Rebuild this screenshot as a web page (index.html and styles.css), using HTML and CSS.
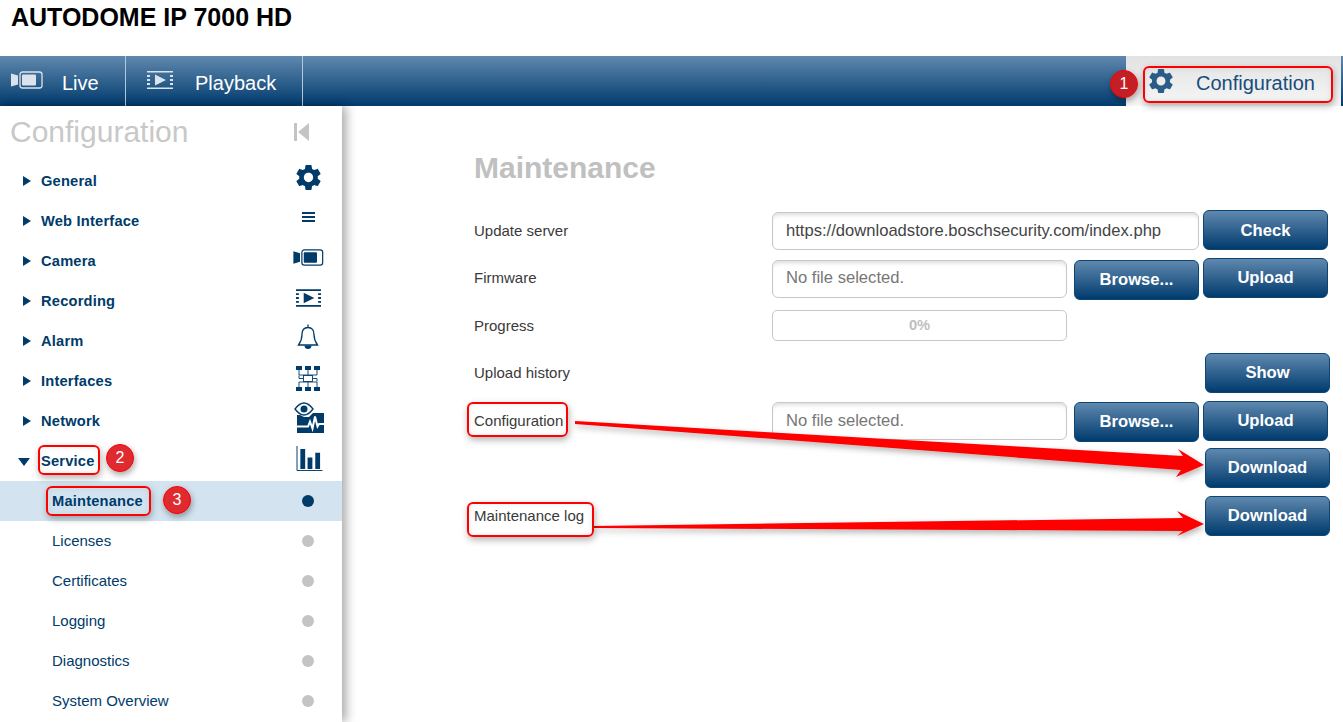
FILE: index.html
```html
<!DOCTYPE html>
<html lang="en">
<head>
<meta charset="utf-8">
<title>AUTODOME IP 7000 HD</title>
<link rel="stylesheet" href="styles.css">
</head>
<body>
<svg class="defs" width="0" height="0" aria-hidden="true">
  <symbol id="gear" viewBox="0 0 24 24"><path d="M19.14 12.94c.04-.3.06-.61.06-.94 0-.32-.02-.64-.07-.94l2.03-1.58c.18-.14.23-.41.12-.61l-1.92-3.32c-.12-.22-.37-.29-.59-.22l-2.39.96c-.5-.38-1.03-.7-1.62-.94l-.36-2.54c-.04-.24-.24-.41-.48-.41h-3.84c-.24 0-.43.17-.47.41l-.36 2.54c-.59.24-1.13.57-1.62.94l-2.39-.96c-.22-.08-.47 0-.59.22L2.74 8.87c-.12.21-.08.47.12.61l2.03 1.58c-.05.3-.09.63-.09.94s.02.64.07.94l-2.03 1.58c-.18.14-.23.41-.12.61l1.92 3.32c.12.22.37.29.59.22l2.39-.96c.5.38 1.03.7 1.62.94l.36 2.54c.05.24.24.41.48.41h3.84c.24 0 .44-.17.47-.41l.36-2.54c.59-.24 1.13-.56 1.62-.94l2.39.96c.22.08.47 0 .59-.22l1.92-3.32c.12-.22.07-.47-.12-.61l-2.01-1.58zM12 15.6c-1.98 0-3.6-1.62-3.6-3.6s1.62-3.6 3.6-3.6 3.6 1.62 3.6 3.6-1.62 3.6-3.6 3.6z" fill-rule="evenodd"/></symbol>
  <symbol id="cam" viewBox="0 0 32 18"><path d="M0 2.500l7 2v9l-7 2z"/><rect x="9" y="1" width="22" height="16" rx="2.500" fill="none" stroke="currentColor" stroke-width="1.300"/><rect x="11" y="3.500" width="14" height="11" rx="1"/></symbol>
  <symbol id="play" viewBox="0 0 26 18"><path d="M0 0h26v1.600H0zM0 16.400h26V18H0zM0 4h3v2H0zM0 8h3v2H0zM0 12h3v2H0zM23 4h3v2h-3zM23 8h3v2h-3zM23 12h3v2h-3zM8 3.500l11 5.500-11 5.500z"/></symbol>
</svg>

<h1 class="device">AUTODOME IP 7000 HD</h1>

<header class="topbar">
  <a class="tab tab-live"><svg class="tab-icon tab-icon-cam"><use href="#cam"/></svg><span>Live</span></a>
  <a class="tab tab-playback"><svg class="tab-icon tab-icon-play"><use href="#play"/></svg><span>Playback</span></a>
  <a class="tab-active"><svg class="tab-gear"><use href="#gear"/></svg><span>Configuration</span></a>
</header>

<div class="main">
  <nav class="sidebar">
    <div class="side-head">
      <span class="side-title">Configuration</span>
      <svg class="collapse" viewBox="0 0 15 18"><path d="M0 0h3v18H0zM15 0v18L4 9z"/></svg>
    </div>
    <ul class="menu">
      <li class="item"><i class="arrow"></i><b>General</b><svg class="ico ico-gear"><use href="#gear"/></svg></li>
      <li class="item"><i class="arrow"></i><b>Web Interface</b><svg class="ico ico-lines" viewBox="0 0 13 10"><path d="M0 0h13v2H0zM0 4h13v2H0zM0 8h13v2H0z"/></svg></li>
      <li class="item"><i class="arrow"></i><b>Camera</b><svg class="ico ico-cam"><use href="#cam"/></svg></li>
      <li class="item"><i class="arrow"></i><b>Recording</b><svg class="ico ico-play"><use href="#play"/></svg></li>
      <li class="item"><i class="arrow"></i><b>Alarm</b>
        <svg class="ico ico-bell" viewBox="0 0 22 26"><path d="M11 0.500v3M11 3.500c-4 0-6 3-6 7 0 5-1 7-3.500 10.500h19c-2.500-3.500-3.500-5.500-3.500-10.500 0-4-2-7-6-7z" fill="none" stroke="currentColor" stroke-width="1.300"/><path d="M7.500 21.500h7c0 2.500-1.500 3.500-3.500 3.500s-3.500-1-3.500-3.500z"/></svg></li>
      <li class="item"><i class="arrow"></i><b>Interfaces</b>
        <svg class="ico ico-net" viewBox="0 0 24 25"><path d="M0 0h6v4H0zM9 0h6v4H9zM18 0h6v4h-6zM0 21h6v4H0zM9 21h6v4H9zM18 21h6v4h-6z"/><path d="M3 4v5h18V4M12 4v5M3 21v-5h18v5M12 16v5M7.500 12.500H3v-3M16.500 12.500H21v3" fill="none" stroke="currentColor" stroke-width=".9"/><rect x="7.500" y="9.500" width="9" height="6" fill="#fff" stroke="currentColor" stroke-width=".9"/></svg></li>
      <li class="item"><i class="arrow"></i><b>Network</b>
        <svg class="ico ico-eye" viewBox="0 0 30 31"><path d="M1 7c3-4 6-6 9-6s6 2 9 6c-3 4-6 6-9 6S4 11 1 7z" fill="#fff" stroke="currentColor" stroke-width="1.300"/><circle cx="10" cy="7" r="3.500"/><path d="M3 13h3l4 2h5l4-4h11v20H3z"/><path d="M3 24.500h11l2-5 2.500 7 2.500-12 2.500 10 1.500-2.500H30" fill="none" stroke="#fff" stroke-width="2"/></svg></li>
      <li class="item"><i class="arrow arrow-open"></i><b>Service</b>
        <svg class="ico ico-bars" viewBox="0 0 27 26"><path d="M.5 0v25.500H27" fill="none" stroke="currentColor"/><path d="M4 3h5v21H4zM11.500 12h5v12h-5zM19.500 7h5v17h-5z"/></svg></li>
      <li class="sub sub-active"><b>Maintenance</b><i class="dot"></i></li>
      <li class="sub"><span>Licenses</span><i class="dot"></i></li>
      <li class="sub"><span>Certificates</span><i class="dot"></i></li>
      <li class="sub"><span>Logging</span><i class="dot"></i></li>
      <li class="sub"><span>Diagnostics</span><i class="dot"></i></li>
      <li class="sub"><span>System Overview</span><i class="dot"></i></li>
    </ul>
  </nav>

  <section class="content">
    <h2 class="page-title">Maintenance</h2>
    <div class="form">
      <div class="row row-a row-top">
        <label>Update server</label>
        <div class="field field-wide">https://downloadstore.boschsecurity.com/index.php</div>
        <button class="btn btn-check">Check</button>
      </div>
      <div class="row row-a">
        <label>Firmware</label>
        <div class="field field-file">No file selected.</div>
        <button class="btn btn-browse">Browse...</button>
        <button class="btn btn-side">Upload</button>
      </div>
      <div class="row row-b">
        <label>Progress</label>
        <div class="progress">0%</div>
      </div>
      <div class="row row-a">
        <label>Upload history</label>
        <button class="btn btn-far">Show</button>
      </div>
      <div class="row row-b">
        <label>Configuration</label>
        <div class="field field-file">No file selected.</div>
        <button class="btn btn-browse">Browse...</button>
        <button class="btn btn-side">Upload</button>
      </div>
      <div class="row row-a">
        <label></label>
        <button class="btn btn-far">Download</button>
      </div>
      <div class="row row-a">
        <label>Maintenance log</label>
        <button class="btn btn-far">Download</button>
      </div>
    </div>
  </section>
</div>

<svg class="arrows" viewBox="0 0 1343 722" aria-hidden="true">
  <defs><filter id="sh" x="-5%" y="-50%" width="110%" height="200%"><feDropShadow dx="1" dy="3" stdDeviation="3" flood-color="#000" flood-opacity=".3"/></filter></defs>
  <polygon filter="url(#sh)" fill="#ff0000" points="575,421 1183,456 1178,449 1204,465 1176,477 1181,470 575,424"/>
  <polygon filter="url(#sh)" fill="#ff0000" points="594,526 1183,518 1177,511 1204,524 1177,536 1183,531 594,528"/>
</svg>
<div class="mark mark-conf"></div>
<div class="mark mark-service"></div>
<div class="mark mark-maint"></div>
<div class="mark mark-label1"></div>
<div class="mark mark-label2"></div>
<div class="badge badge-1">1</div>
<div class="badge badge-2">2</div>
<div class="badge badge-3">3</div>
</body>
</html>
```
FILE: styles.css
```css
* { box-sizing: border-box; }
html, body { margin: 0; padding: 0; height: 722px; overflow: hidden; background: #fff; }
body { font-family: "Liberation Sans", Arial, sans-serif; position: relative; }
.defs { position: absolute; }

.device { margin: 0; height: 56px; padding: 4px 0 0 11px; font-size: 25px; line-height: 26px; font-weight: 700; color: #000; }

.topbar { display: flex; height: 50px; background: linear-gradient(#5f88ae, #003b6e); color: #fff; }
.tab { display: flex; align-items: center; height: 50px; border-right: 1px solid #b5c8da; font-size: 20px; padding-top: 4px; }
.tab-live { width: 126px; }
.tab-playback { width: 177px; }
.tab-icon { fill: #dbe4ec; color: #dbe4ec; flex: none; margin-top: -6px; }
.tab-icon-cam { width: 32px; height: 18px; margin-left: 11px; margin-right: 19px; }
.tab-icon-play { width: 26px; height: 18px; margin-left: 21px; margin-right: 22px; }
.tab-active { margin-left: auto; margin-right: 2px; width: 215px; display: flex; align-items: center; background: linear-gradient(#e2e2e2, #f6f6f6); color: #174d7c; font-size: 20px; padding-top: 5px; }
.tab-gear { width: 30px; height: 30px; fill: #2b5c88; margin-left: 20px; margin-right: 20px; margin-top: -6px; flex: none; }

.main { display: flex; height: 616px; }
.sidebar { width: 342px; flex: none; box-shadow: 4px 0 10px rgba(0,0,0,.35); background: #fff; position: relative; }
.side-head { display: flex; align-items: center; height: 55px; padding-left: 10px; }
.side-title { font-size: 30px; color: #c8c8c8; flex: 1; line-height: 52px; margin-top: -4px; }
.collapse { width: 15px; height: 18px; fill: #c4c4c4; margin-right: 33px; margin-top: -3px; }
.menu { list-style: none; margin: 0; padding: 0; }
.item, .sub { position: relative; display: flex; align-items: center; height: 40px; color: #003b6a; font-size: 15px; }
.item b, .sub b { font-weight: 700; font-size: 14.67px; letter-spacing: .2px; }
.item { padding-left: 41px; }
.arrow { position: absolute; left: 23px; top: 15px; border-left: 8px solid #003b6a; border-top: 5px solid transparent; border-bottom: 5px solid transparent; }
.arrow-open { left: 18px; top: 17px; border-top: 8px solid #003b6a; border-left: 6px solid transparent; border-right: 6px solid transparent; border-bottom: 0; }
.sub { padding-left: 52px; padding-bottom: 2px; }
.sub-active { background: #d3e4f0; padding-bottom: 0; }
.dot { position: absolute; left: 302px; top: 14px; width: 12px; height: 12px; border-radius: 50%; background: #c4c4c4; }
.sub-active .dot { background: #003b6a; }
.ico { position: absolute; fill: #003b6a; color: #003b6a; }
.ico-gear { left: 293px; top: 1px; width: 31px; height: 31px; }
.ico-lines { left: 302px; top: 11px; width: 13px; height: 10px; }
.ico-cam { left: 293px; top: 8px; width: 31px; height: 17px; }
.ico-play { left: 296px; top: 8px; width: 25px; height: 18px; }
.ico-bell { left: 297px; top: 3px; width: 22px; height: 26px; }
.ico-net { left: 296px; top: 5px; width: 24px; height: 25px; }
.ico-eye { left: 294px; top: 1px; width: 30px; height: 31px; }
.ico-bars { left: 296px; top: 5px; width: 27px; height: 25px; }

.content { flex: 1; padding: 44px 0 0 132px; color: #333; }
.page-title { margin: 0; font-size: 30px; line-height: 36px; color: #c0c0c0; font-weight: 700; height: 60px; }
.form { display: flex; flex-direction: column; }
.row { display: flex; align-items: flex-start; position: relative; }
.row-a { height: 48px; }
.row-b { height: 47px; }
.row label { width: 298px; flex: none; font-size: 15px; line-height: 40px; color: #3a3a3a; }
.row-top label { line-height: 42px; }
.field { height: 38px; margin-top: 2px; border: 1px solid #c8c8c8; border-radius: 6px; font-size: 16.6px; line-height: 33px; padding-left: 13px; color: #444; box-shadow: inset 0 4px 4px -2px rgba(0,0,0,.14); background: #fff; }
.field-wide { width: 427px; line-height: 35px; }
.field-file { width: 295px; color: #777; }
.row-b .field { margin-top: 1px; line-height: 35px; }
.progress { width: 295px; height: 31px; margin-top: 4px; border: 1px solid #c8c8c8; border-radius: 5px; text-align: center; font-size: 14.67px; font-weight: 700; color: #c0c0c0; line-height: 29px; }
.btn { height: 40px; width: 125px; border: 1px solid #0c4675; border-radius: 6px; background: linear-gradient(#5f88ae, #003b6e); color: #fff; font: 700 16.6px "Liberation Sans", Arial, sans-serif; padding: 0 0 1px; }
.btn-check { margin-left: 4px; padding: 2px 0 0; }
.btn-browse { margin-left: 7px; margin-top: 2px; }
.row-b .btn-browse { margin-top: 1px; }
.btn-side { margin-left: 4px; }
.btn-far { margin-left: 433px; }

.arrows { position: absolute; left: 0; top: 0; width: 1343px; height: 722px; pointer-events: none; }
.mark { position: absolute; border: 2px solid #f00; border-radius: 6px; box-shadow: 1px 3px 7px rgba(0,0,0,.3), inset 0 0 6px rgba(0,0,0,.08); }
.mark-conf { left: 1143px; top: 66px; width: 190px; height: 37px; }
.mark-service { left: 38px; top: 445px; width: 62px; height: 30px; }
.mark-maint { left: 46px; top: 486px; width: 105px; height: 30px; }
.mark-label1 { left: 467px; top: 402px; width: 101px; height: 35px; }
.mark-label2 { left: 467px; top: 502px; width: 127px; height: 35px; }
.badge { position: absolute; width: 28px; height: 28px; border-radius: 50%; background: #df2a30; border: 1px solid #f00; color: #fff; font-size: 16px; line-height: 26px; text-align: center; box-shadow: 1px 3px 6px rgba(0,0,0,.35); }
.badge-1 { left: 1110px; top: 70px; background: #c41f25; }
.badge-2 { left: 106px; top: 444px; }
.badge-3 { left: 163px; top: 486px; }
```
